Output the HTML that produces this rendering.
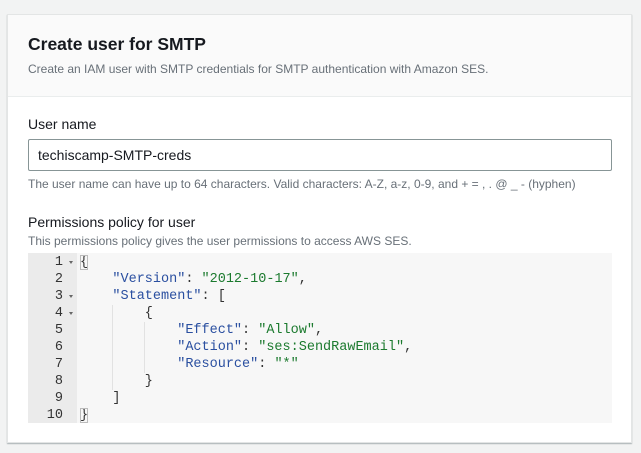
<!DOCTYPE html>
<html><head><style>
*{margin:0;padding:0;box-sizing:border-box}
body{width:641px;height:453px;background:#f2f3f3;font-family:"Liberation Sans",sans-serif;position:relative;overflow:hidden}
.card{position:absolute;left:7px;top:14px;width:625px;height:429px;background:#fff;border:1px solid #e3e5e5;box-shadow:0 1px 1px rgba(0,28,36,.3)}
.hdr{position:absolute;left:0;top:0;width:100%;height:82px;background:#fafafa;border-bottom:1px solid #eaeded}
.abs{position:absolute;white-space:nowrap}
.code{position:absolute;left:20px;top:238px;width:584px;height:170px;background:#f7f7f7;font-family:"Liberation Mono",monospace;font-size:13.5px;line-height:17px}
.gut{position:absolute;left:0;top:0;width:49px;height:100%;background:#ebebeb;color:#333;text-align:right;padding-top:1px}
.gut div{padding-right:14px;position:relative}
.gut .f::after{content:"";position:absolute;right:4px;top:7px;border-left:2.5px solid transparent;border-right:2.5px solid transparent;border-top:3px solid #666}
.txt{position:absolute;left:52px;top:1px;color:#333}
.k{color:#2a4fa0}.s{color:#1b7a2e}
.br{outline:1px solid #bbb;outline-offset:-1px}
.g{position:absolute;width:1px;background:#e2e2e2}
</style></head><body>
<div class="card">
<div class="hdr">
<div class="abs" style="left:20px;top:19px;font-size:17.5px;font-weight:bold;color:#16191f">Create user for SMTP</div>
<div class="abs" style="left:20px;top:47px;font-size:12px;color:#687078">Create an IAM user with SMTP credentials for SMTP authentication with Amazon SES.</div>
</div>
<div class="abs" style="left:20px;top:101px;font-size:14px;color:#16191f">User name</div>
<div class="abs" style="left:20px;top:124px;width:584px;height:32px;border:1px solid #879596;border-radius:2px;font-size:14px;color:#16191f;padding:7px 0 0 9px">techiscamp-SMTP-creds</div>
<div class="abs" style="left:20px;top:162px;font-size:12px;color:#687078">The user name can have up to 64 characters. Valid characters: A-Z, a-z, 0-9, and + = , . @ _ - (hyphen)</div>
<div class="abs" style="left:20px;top:199px;font-size:14px;color:#16191f">Permissions policy for user</div>
<div class="abs" style="left:20px;top:219px;font-size:12px;color:#687078">This permissions policy gives the user permissions to access AWS SES.</div>
<div class="code">
<div class="gut"><div class="f">1</div><div>2</div><div class="f">3</div><div class="f">4</div><div>5</div><div>6</div><div>7</div><div>8</div><div>9</div><div>10</div></div>
<div class="g" style="left:84px;top:52px;height:85px"></div>
<div class="g" style="left:116px;top:69px;height:51px"></div>
<div class="txt"><pre style="font:inherit"><span class="br">{</span>
    <span class="k">"Version"</span>: <span class="s">"2012-10-17"</span>,
    <span class="k">"Statement"</span>: [
        {
            <span class="k">"Effect"</span>: <span class="s">"Allow"</span>,
            <span class="k">"Action"</span>: <span class="s">"ses:SendRawEmail"</span>,
            <span class="k">"Resource"</span>: <span class="s">"*"</span>
        }
    ]
<span class="br">}</span></pre></div>
</div>
</div>
</body></html>
